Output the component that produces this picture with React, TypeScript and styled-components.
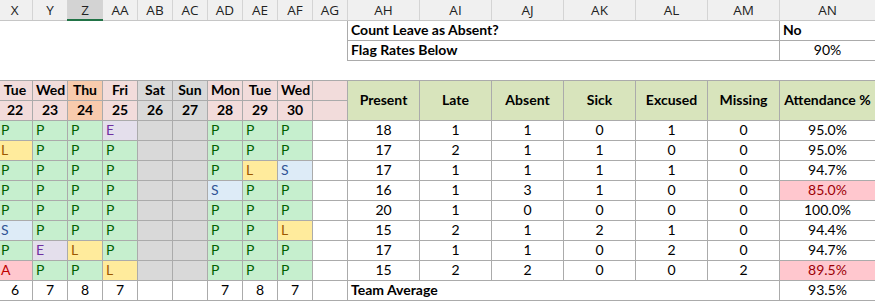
import styled, { createGlobalStyle } from "styled-components";

const GlobalStyle = createGlobalStyle`
  html, body {
    margin: 0;
    background: #ffffff;
  }
`;

const GRID = "#ababab";

// what each attendance code looks like (Excel conditional formats)
const MARKS: Record<string, { fill: string; ink: string }> = {
  P: { fill: "#c6efce", ink: "#006100" },
  L: { fill: "#ffeb9c", ink: "#9c5700" },
  S: { fill: "#ddebf7", ink: "#305496" },
  E: { fill: "#e4dfec", ink: "#7030a0" },
  A: { fill: "#ffc7ce", ink: "#c00000" },
  "-": { fill: "#d9d9d9", ink: "#000000" },
};

const columns = ["X", "Y", "Z", "AA", "AB", "AC", "AD", "AE", "AF", "AG", "AH", "AI", "AJ", "AK", "AL", "AM", "AN"];
const widths = [35, 35, 35, 35, 35, 35, 35, 35, 35, 35, 72, 72, 72, 72, 72, 72, 96];

const days = [
  { name: "Tue", date: 22, fill: "#f2dcdb" },
  { name: "Wed", date: 23, fill: "#f2dcdb" },
  { name: "Thu", date: 24, fill: "#f8cbad" },
  { name: "Fri", date: 25, fill: "#f2dcdb" },
  { name: "Sat", date: 26, fill: "#d9d9d9" },
  { name: "Sun", date: 27, fill: "#d9d9d9" },
  { name: "Mon", date: 28, fill: "#f2dcdb" },
  { name: "Tue", date: 29, fill: "#f2dcdb" },
  { name: "Wed", date: 30, fill: "#f2dcdb" },
];

const statHeads = ["Present", "Late", "Absent", "Sick", "Excused", "Missing", "Attendance %"];

const rows = [
  { marks: "PPPE--PPP", stats: [18, 1, 1, 0, 1, 0], rate: "95.0%", flag: false },
  { marks: "LPPP--PPP", stats: [17, 2, 1, 1, 0, 0], rate: "95.0%", flag: false },
  { marks: "PPPP--PLS", stats: [17, 1, 1, 1, 1, 0], rate: "94.7%", flag: false },
  { marks: "PPPP--SPP", stats: [16, 1, 3, 1, 0, 0], rate: "85.0%", flag: true },
  { marks: "PPPP--PPP", stats: [20, 1, 0, 0, 0, 0], rate: "100.0%", flag: false },
  { marks: "SPPP--PPL", stats: [15, 2, 1, 2, 1, 0], rate: "94.4%", flag: false },
  { marks: "PELP--PPP", stats: [17, 1, 1, 0, 2, 0], rate: "94.7%", flag: false },
  { marks: "APPL--PPP", stats: [15, 2, 2, 0, 0, 2], rate: "89.5%", flag: true },
];

const dayTotals = ["6", "7", "8", "7", "", "", "7", "8", "7"];

const Sheet = styled.table`
  border-collapse: collapse;
  table-layout: fixed;
  width: 878px;
  margin-left: -3px;
  font-family: Lato, "Liberation Sans", sans-serif;
  font-size: 14px;
  color: #000000;
`;

const Row = styled.tr`
  height: 20px;
`;

const ColHead = styled.th<{ $selected?: boolean }>`
  padding: 0;
  height: 19px;
  font-family: "Open Sans", "Noto Sans", sans-serif;
  font-size: 13.5px;
  font-weight: 400;
  color: #222222;
  text-align: center;
  background: ${(p) => (p.$selected ? "#d3d3d3" : "#f0f0f0")};
  border-right: 1px solid #d4d4d4;
  border-bottom: ${(p) => (p.$selected ? "2px solid #217346" : "1px solid #c6c6c6")};
`;

const Cell = styled.td<{
  $fill?: string;
  $ink?: string;
  $bold?: boolean;
  $align?: "left" | "center";
  $grid?: boolean;
}>`
  height: 19px;
  padding: 0 3px;
  line-height: 18px;
  white-space: nowrap;
  overflow: hidden;
  background: ${(p) => p.$fill ?? "transparent"};
  color: ${(p) => p.$ink ?? "#000000"};
  font-weight: ${(p) => (p.$bold ? 700 : 400)};
  text-align: ${(p) => p.$align ?? "center"};
  border: ${(p) => (p.$grid ? `1px solid ${GRID}` : "none")};
`;

const StatHead = styled(Cell).attrs({ $grid: true, $bold: true, $fill: "#d8e4bc" })``;

const Blank = () => (
  <>
    {columns.slice(0, 10).map((c) => (
      <Cell key={c} />
    ))}
  </>
);

export default function App() {
  return (
    <>
      <GlobalStyle />
      <Sheet>
        <colgroup>
          {widths.map((w, i) => (
            <col key={i} style={{ width: w }} />
          ))}
        </colgroup>
        <tbody>
          <Row>
            {columns.map((c) => (
              <ColHead key={c} $selected={c === "Z"}>
                {c}
              </ColHead>
            ))}
          </Row>

          <Row>
            <Blank />
            <Cell colSpan={6} $grid $bold $align="left">
              Count Leave as Absent?
            </Cell>
            <Cell $grid $bold $align="left">
              No
            </Cell>
          </Row>
          <Row>
            <Blank />
            <Cell colSpan={6} $grid $bold $align="left">
              Flag Rates Below
            </Cell>
            <Cell $grid>90%</Cell>
          </Row>
          <Row>
            {columns.map((c) => (
              <Cell key={c} />
            ))}
          </Row>

          <Row>
            {days.map((d, i) => (
              <Cell key={i} $grid $bold $fill={d.fill}>
                {d.name}
              </Cell>
            ))}
            <Cell $grid $fill="#f2dcdb" />
            {statHeads.map((h) => (
              <StatHead key={h} rowSpan={2}>
                {h}
              </StatHead>
            ))}
          </Row>
          <Row>
            {days.map((d, i) => (
              <Cell key={i} $grid $bold $fill={d.fill}>
                {d.date}
              </Cell>
            ))}
            <Cell $grid $fill="#f2dcdb" />
          </Row>

          {rows.map((r, ri) => (
            <Row key={ri}>
              {r.marks.split("").map((m, mi) => (
                <Cell key={mi} $grid $align="left" $fill={MARKS[m].fill} $ink={MARKS[m].ink}>
                  {m === "-" ? "" : m}
                </Cell>
              ))}
              <Cell $grid />
              {r.stats.map((s, si) => (
                <Cell key={si} $grid>
                  {s}
                </Cell>
              ))}
              <Cell $grid $fill={r.flag ? "#ffc7ce" : undefined} $ink={r.flag ? "#9c0006" : undefined}>
                {r.rate}
              </Cell>
            </Row>
          ))}

          <Row>
            {dayTotals.map((t, i) => (
              <Cell key={i} $grid>
                {t}
              </Cell>
            ))}
            <Cell $grid />
            <Cell colSpan={6} $grid $bold $align="left">
              Team Average
            </Cell>
            <Cell $grid>93.5%</Cell>
          </Row>
        </tbody>
      </Sheet>
    </>
  );
}
